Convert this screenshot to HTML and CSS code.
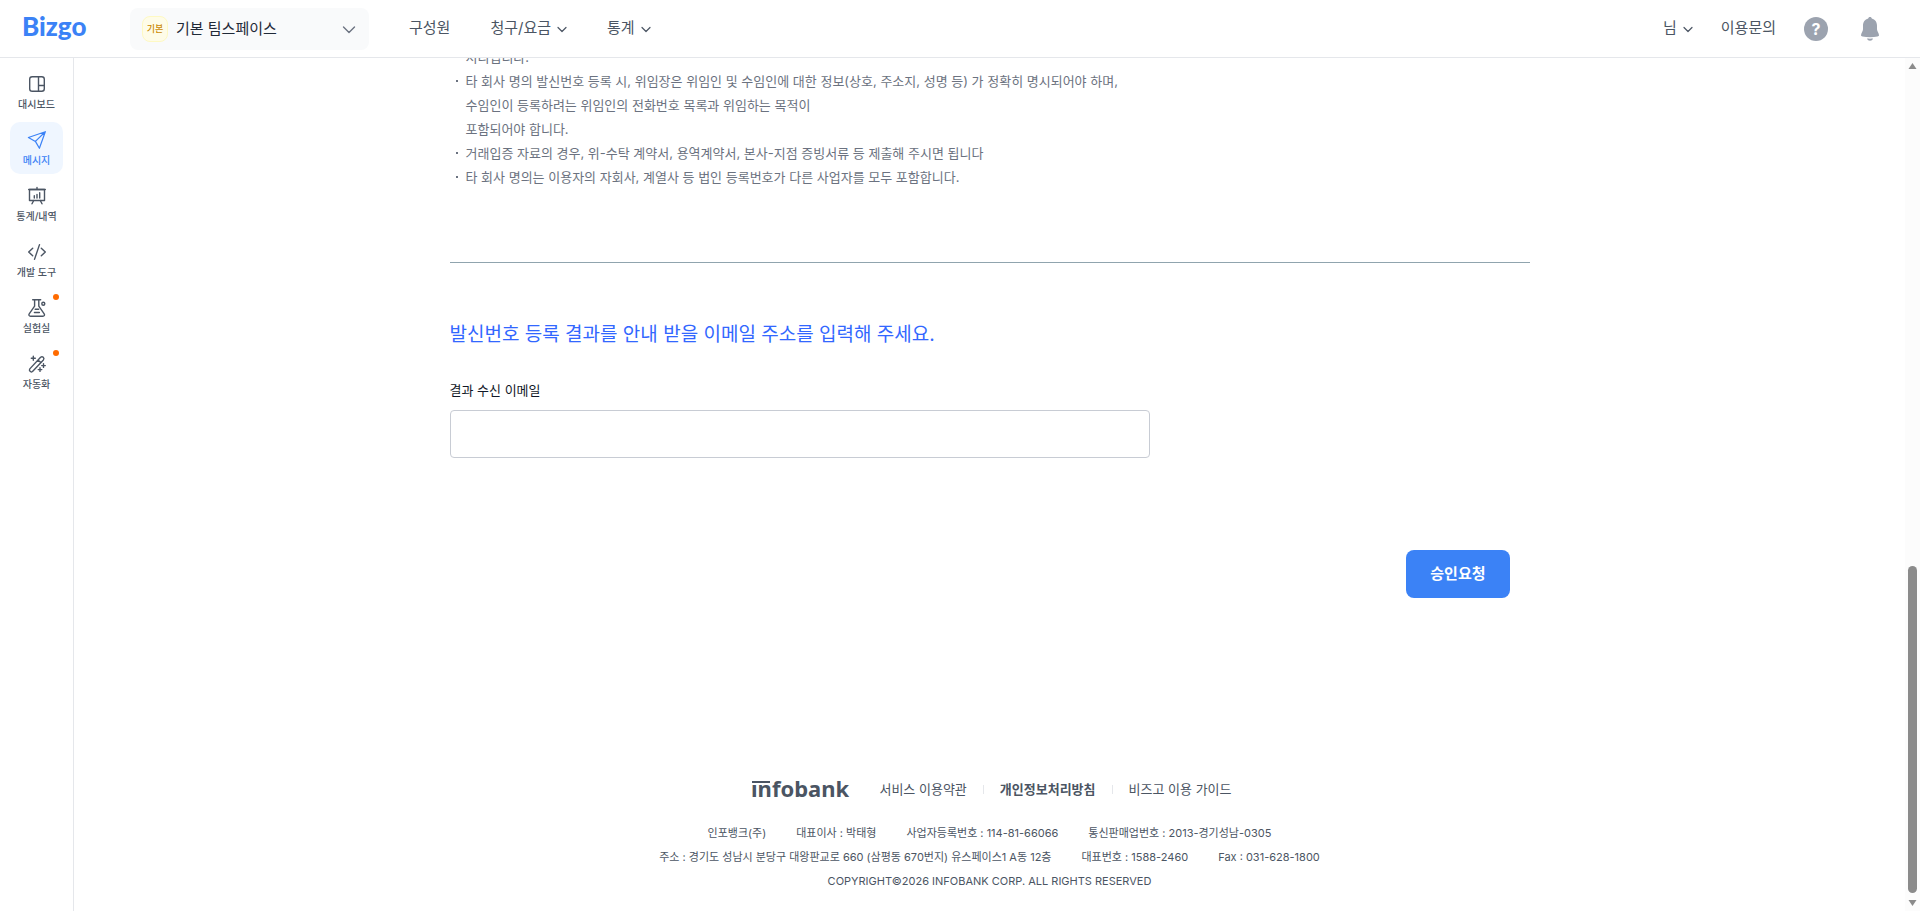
FILE: index.html
```html
<!DOCTYPE html>
<html lang="ko">
<head>
<meta charset="utf-8">
<meta name="viewport" content="width=device-width, initial-scale=1">
<title>Bizgo</title>
<link rel="stylesheet" href="styles.css">
</head>
<body>
<header class="header">
  <a class="brand" href="#" aria-label="Bizgo">
    <svg width="66" height="36" viewBox="0 0 66 36"><text class="brand-text" x="0" y="25">Bizgo</text></svg>
  </a>
  <button class="team" type="button">
    <span class="team-badge">기본</span>
    <span class="team-name">기본 팀스페이스</span>
    <svg class="line-icon" width="14" height="14" viewBox="0 0 14 14"><path d="M1.500 5 7 10.500l5.500-5.500"/></svg>
  </button>
  <nav class="nav">
    <a href="#">구성원</a>
    <a href="#">청구/요금 <svg class="line-icon thin" width="10" height="10" viewBox="0 0 10 10"><path d="M1 4.500 5 8.500l4-4"/></svg></a>
    <a href="#">통계 <svg class="line-icon thin" width="10" height="10" viewBox="0 0 10 10"><path d="M1 4.500 5 8.500l4-4"/></svg></a>
  </nav>
  <div class="tools">
    <button class="user" type="button">님 <svg class="line-icon thin" width="10" height="10" viewBox="0 0 10 10"><path d="M1 4.500 5 8.500l4-4"/></svg></button>
    <a class="inquiry" href="#">이용문의</a>
    <button class="help" type="button" aria-label="도움말">?</button>
    <button class="bell" type="button" aria-label="알림">
      <svg width="24" height="24" viewBox="0 0 24 24" fill="currentColor"><path d="M12 0c1 0 1.700.7 1.800 1.600 3.300.8 5.200 3.700 5.200 7.100v3.500c0 2 2 3.700 2 6.100 0 .7-.6 1.100-1.500 1.300-4.500.7-10.500.7-15 0C3.600 19.400 3 19 3 18.300c0-2.400 2-4.100 2-6.100V8.700c0-3.400 1.900-6.300 5.200-7.100C10.300.7 11 0 12 0z"/><path d="M9 21.600c2 .2 4 .2 6 0-.5 1.400-1.500 2.200-3 2.200s-2.500-.8-3-2.200z"/></svg>
    </button>
  </div>
</header>
<div class="body">
  <nav class="side">
    <a class="side-item" href="#">
      <svg class="line-icon" width="20" height="20" viewBox="0 0 20 20"><rect x="2.700" y="2.700" width="14.600" height="14.600" rx="2.500"/><path d="M11.500 2.700v14.600M11.500 11.500h5.800"/></svg>
      대시보드
    </a>
    <a class="side-item side-active" href="#">
      <svg class="line-icon thin" width="20" height="20" viewBox="0 0 20 20"><path d="M18.300 1.700 1.400 7.500l7 3.900 4 6.900zM18.300 1.700 8.400 11.400"/></svg>
      메시지
    </a>
    <a class="side-item" href="#">
      <svg class="line-icon" width="20" height="20" viewBox="0 0 20 20"><rect x="2.500" y="3.500" width="15" height="11"/><path d="M1.700 3.500h16.600M10 1.500v2M6.700 14.500 5 17.800M13.300 14.500 15 17.800M7.300 12V9.800M10 12V8.500M12.700 12V6.800"/></svg>
      통계/내역
    </a>
    <a class="side-item" href="#">
      <svg class="line-icon" width="20" height="20" viewBox="0 0 20 20"><path d="M5.700 6.200 1.700 10l4 3.800M14.300 6.200l4 3.800-4 3.800M12.500 2.600l-5 14.800"/></svg>
      개발 도구
    </a>
    <a class="side-item" href="#">
      <svg class="line-icon" width="20" height="20" viewBox="0 0 20 20"><path d="M5.700 1.800h8M7.600 1.800v6.400L2.200 15.800c-.8 1.200 0 2.500 1.300 2.500h12.400c1.300 0 2.100-1.300 1.300-2.500l-5.400-7.600V1.800M8.200 11.300h3.500M7.400 14.500h5"/><circle cx="16.300" cy="5.700" r="1.500"/></svg>
      실험실
      <span class="dot"></span>
    </a>
    <a class="side-item" href="#">
      <svg class="line-icon" width="20" height="20" viewBox="0 0 20 20"><path d="M2.800 14.900 13.600 3.200c1.900-1.500 4.300.8 2.800 2.700L5.500 17.500c-1.800 1.200-3.900-.8-2.700-2.600zM11 6l2.700 2.600M6.300 2.200v4M4.300 4.200h4M16.500 9.800v3.600M14.700 11.600h3.600M13 13.800v3.600M11.200 15.600h3.600"/></svg>
      자동화
      <span class="dot"></span>
    </a>
  </nav>
  <main class="main">
    <section class="content">
      <ul class="notes">
        <li class="cont">처리됩니다.</li>
        <li>타 회사 명의 발신번호 등록 시, 위임장은 위임인 및 수임인에 대한 정보(상호, 주소지, 성명 등) 가 정확히 명시되어야 하며,<br>수임인이 등록하려는 위임인의 전화번호 목록과 위임하는 목적이<br>포함되어야 합니다.</li>
        <li>거래입증 자료의 경우, 위-수탁 계약서, 용역계약서, 본사-지점 증빙서류 등 제출해 주시면 됩니다</li>
        <li>타 회사 명의는 이용자의 자회사, 계열사 등 법인 등록번호가 다른 사업자를 모두 포함합니다.</li>
      </ul>
      <form class="form">
        <h2 class="title">발신번호 등록 결과를 안내 받을 이메일 주소를 입력해 주세요.</h2>
        <label class="label" for="email">결과 수신 이메일</label>
        <input class="input" id="email" type="email">
        <button class="submit" type="button">승인요청</button>
      </form>
    </section>
    <footer class="footer">
      <div class="links">
        <a class="corp" href="#" aria-label="infobank">
          <svg width="98" height="24" viewBox="0 0 98 24"><text class="corp-text" x="0" y="20">infobank</text><rect x="0" y="0" width="19" height="8" fill="#fff"/><rect x="1" y="4" width="18" height="2" fill="#4b5563"/></svg>
        </a>
        <a href="#">서비스 이용약관</a>
        <span class="bar"></span>
        <a class="strong" href="#">개인정보처리방침</a>
        <span class="bar"></span>
        <a href="#">비즈고 이용 가이드</a>
      </div>
      <div class="info"><span>인포뱅크(주)</span><span>대표이사 : 박태형</span><span>사업자등록번호 : 114-81-66066</span><span>통신판매업번호 : 2013-경기성남-0305</span></div>
      <div class="info"><span>주소 : 경기도 성남시 분당구 대왕판교로 660 (삼평동 670번지) 유스페이스1 A동 12층</span><span>대표번호 : 1588-2460</span><span>Fax : 031-628-1800</span></div>
      <div class="info">COPYRIGHT©2026 INFOBANK CORP. ALL RIGHTS RESERVED</div>
    </footer>
  </main>
  <div class="scroll" aria-hidden="true">
    <svg width="9" height="8" viewBox="0 0 9 8"><path d="M4.500 1 8.500 7H.5z"/></svg>
    <div class="rail"><div class="thumb"></div></div>
    <svg width="9" height="8" viewBox="0 0 9 8"><path d="M4.500 7 .5 1h8z"/></svg>
  </div>
</div>
</body>
</html>
```
FILE: styles.css
```css
* { box-sizing: border-box; }
body {
  margin: 0;
  height: 100vh;
  display: flex;
  flex-direction: column;
  overflow: hidden;
  background: #fff;
  color: #4b5563;
  font-family: Inter, "Noto Sans CJK KR", sans-serif;
  font-size: 13px;
  line-height: 24px;
}
a { color: inherit; text-decoration: none; }
button {
  border: 0;
  padding: 0;
  background: none;
  color: inherit;
  font: inherit;
  cursor: pointer;
}
svg { display: block; flex: none; overflow: visible; }
.line-icon {
  fill: none;
  stroke: currentColor;
  stroke-width: 1.4;
  stroke-linecap: round;
  stroke-linejoin: round;
}
.thin { stroke-width: 1.2; }

.header {
  flex: none;
  display: flex;
  align-items: center;
  height: 58px;
  padding: 0 38px 0 22px;
  border-bottom: 1px solid #e5e7eb;
  font-size: 15px;
}
.brand-text {
  fill: #3b82f6;
  font-family: Lato, sans-serif;
  font-size: 26px;
  font-weight: 900;
}
.team {
  display: flex;
  align-items: center;
  gap: 8px;
  width: 239px;
  height: 42px;
  margin-left: 42px;
  padding: 0 13px 0 12px;
  border-radius: 8px;
  background: #f9fafb;
  color: #6b7280;
}
.team-badge {
  width: 26px;
  height: 26px;
  border: 1px solid #fef9c3;
  border-radius: 8px;
  background: #fefce8;
  color: #ca8a04;
  font-size: 9px;
  font-weight: 500;
  text-align: center;
}
.team-name { flex: 1; color: #1f2937; text-align: left; }
.nav { display: flex; gap: 40px; margin-left: 40px; }
.nav, .user, .inquiry { padding-bottom: 2px; }
.nav a, .user { display: flex; align-items: center; gap: 6px; }
.tools { display: flex; align-items: center; margin-left: auto; }
.inquiry { margin: 0 28px; }
.help {
  width: 24px;
  height: 24px;
  border-radius: 50%;
  background: #9ca3af;
  color: #fff;
  font-size: 16px;
  font-weight: 700;
}
.bell { margin-left: 30px; color: #9ca3af; }

.body { flex: 1; display: flex; min-height: 0; }
.side {
  flex: none;
  display: flex;
  flex-direction: column;
  gap: 4px;
  width: 74px;
  padding: 8px 10px;
  border-right: 1px solid #e5e7eb;
}
.side-item {
  position: relative;
  display: flex;
  flex-direction: column;
  align-items: center;
  gap: 2px;
  height: 52px;
  padding-top: 8px;
  border-radius: 10px;
  font-size: 10px;
  font-weight: 500;
  line-height: 16px;
}
.side-active { background: #eff6ff; color: #3b82f6; }
.dot {
  position: absolute;
  top: 4px;
  right: 4px;
  width: 6px;
  height: 6px;
  border-radius: 50%;
  background: #ff6b00;
}

.main {
  flex: 1;
  min-width: 0;
  display: flex;
  flex-direction: column;
  justify-content: flex-end;
  overflow: hidden;
}
.content { width: 100%; max-width: 1080px; margin: 0 auto; }
.notes { margin: 0; padding: 0 0 73px; list-style: none; color: #6b7280; }
.notes li { display: flow-root; padding-left: 16px; position: relative; }
.notes li::before {
  content: "";
  position: absolute;
  top: 11px;
  left: 6px;
  width: 2px;
  height: 2px;
  background: #6b7280;
}
.notes .cont::before { display: none; }
.form {
  display: flex;
  flex-direction: column;
  padding-top: 58px;
  border-top: 1px solid #90a4ae;
}
.title {
  margin: 0 0 30px;
  color: #3267ff;
  font-size: 19px;
  font-weight: 400;
  line-height: 28px;
}
.label { margin-bottom: 9px; color: #111827; line-height: 22px; }
.input {
  width: 100%;
  max-width: 700px;
  height: 48px;
  padding: 0 16px;
  border: 1px solid #c8ccd4;
  border-radius: 4px;
  font: inherit;
}
.submit {
  align-self: flex-end;
  height: 48px;
  margin: 92px 20px 0 0;
  padding: 0 24px;
  border-radius: 8px;
  background: #3b82f6;
  color: #fff;
  font-size: 15px;
  font-weight: 700;
}

.footer { padding: 179px 0 18px; }
.links {
  display: flex;
  align-items: center;
  justify-content: center;
  gap: 16px;
  margin-bottom: 20px;
  padding-left: 4px;
}
.corp { margin-right: 14px; }
.corp-text {
  fill: #4b5563;
  font-family: "Noto Sans", sans-serif;
  font-size: 22px;
  font-weight: 700;
}
.strong { font-weight: 700; }
.bar { width: 1px; height: 9px; background: #e5e7eb; }
.info { display: flex; justify-content: center; gap: 30px; font-size: 11px; }

.scroll {
  flex: none;
  display: flex;
  flex-direction: column;
  align-items: center;
  justify-content: space-between;
  width: 15px;
  padding: 4px 0;
  background: #fcfcfc;
}
.scroll svg { fill: #8b8b8b; }
.rail { flex: 1; display: flex; flex-direction: column; justify-content: flex-end; padding: 6px 0; }
.thumb { width: 9px; height: 40%; border-radius: 5px; background: #8b8b8b; }
```
